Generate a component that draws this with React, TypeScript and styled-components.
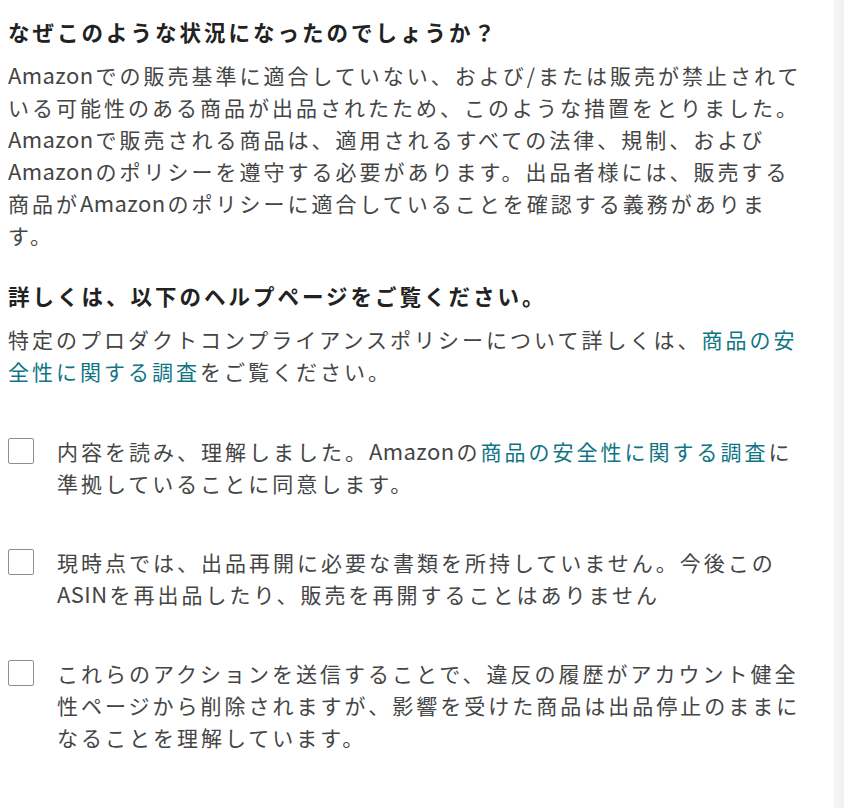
import styled, { createGlobalStyle } from "styled-components";

const GlobalStyle = createGlobalStyle`
  html, body {
    margin: 0;
    padding: 0;
    background: #ffffff;
  }
  body {
    font-family: "Noto Sans CJK JP", "Noto Sans", sans-serif;
    color: #444444;
  }
`;

const Page = styled.div`
  display: flex;
  width: 844px;
  height: 808px;
  overflow: hidden;
  background: #ffffff;
`;

const Content = styled.div`
  flex: 1;
  padding: 16px 0 0 8px;
`;

const SideBar = styled.div`
  width: 11px;
  background: linear-gradient(to right, #f7f7f7, #f0f0f0);
`;

const Heading = styled.h3`
  margin: 0 0 11px 0;
  font-size: 21.5px;
  letter-spacing: 3px;
  line-height: 32px;
  font-weight: 700;
  color: #222222;
  white-space: nowrap;
`;

const Paragraph = styled.p<{ $after?: number }>`
  margin: 0 0 ${(p) => p.$after ?? 29}px 0;
  font-size: 21px;
  letter-spacing: 3px;
  line-height: 32px;
  color: #454545;
  white-space: nowrap;
`;

/* latin words are set tighter than the kana around them */
const Latin = styled.span`
  font-size: 22px;
  line-height: 1;
  letter-spacing: 0.4px;
  margin-right: 2px;
`;

const Link = styled.a`
  color: #0f7585;
  text-decoration: none;
`;

const CheckList = styled.div`
  display: flex;
  flex-direction: column;
  gap: 47px;
  margin-top: 48px;
`;

const CheckRow = styled.label`
  display: flex;
  align-items: flex-start;
  gap: 23px;
`;

const Box = styled.span`
  flex: none;
  width: 26px;
  height: 26px;
  margin-top: 3px;
  box-sizing: border-box;
  border: 1.5px solid #8f8f8f;
  border-radius: 2px;
  background: #ffffff;
`;

const CheckText = styled.span`
  font-size: 21px;
  letter-spacing: 3px;
  line-height: 32px;
  color: #454545;
  white-space: nowrap;
`;

const Amazon = () => <Latin>Amazon</Latin>;
const SafetyLink = () => <Link href="#">商品の安全性に関する調査</Link>;

export default function App() {
  return (
    <Page>
      <GlobalStyle />
      <Content>
        <Heading>なぜこのような状況になったのでしょうか？</Heading>
        <Paragraph>
          <Amazon />での販売基準に適合していない、および/または販売が禁止されて
          <br />
          いる可能性のある商品が出品されたため、このような措置をとりました。
          <br />
          <Amazon />で販売される商品は、適用されるすべての法律、規制、および
          <br />
          <Amazon />のポリシーを遵守する必要があります。出品者様には、販売する
          <br />
          商品が<Amazon />のポリシーに適合していることを確認する義務がありま
          <br />
          す。
        </Paragraph>

        <Heading>詳しくは、以下のヘルプページをご覧ください。</Heading>
        <Paragraph $after={0}>
          特定のプロダクトコンプライアンスポリシーについて詳しくは、
          <Link href="#">商品の安</Link>
          <br />
          <Link href="#">全性に関する調査</Link>をご覧ください。
        </Paragraph>

        <CheckList>
          <CheckRow>
            <Box />
            <CheckText>
              内容を読み、理解しました。<Amazon />の<SafetyLink />に
              <br />
              準拠していることに同意します。
            </CheckText>
          </CheckRow>
          <CheckRow>
            <Box />
            <CheckText>
              現時点では、出品再開に必要な書類を所持していません。今後この
              <br />
              <Latin>ASIN</Latin>を再出品したり、販売を再開することはありません
            </CheckText>
          </CheckRow>
          <CheckRow>
            <Box />
            <CheckText>
              これらのアクションを送信することで、違反の履歴がアカウント健全
              <br />
              性ページから削除されますが、影響を受けた商品は出品停止のままに
              <br />
              なることを理解しています。
            </CheckText>
          </CheckRow>
        </CheckList>
      </Content>
      <SideBar />
    </Page>
  );
}
